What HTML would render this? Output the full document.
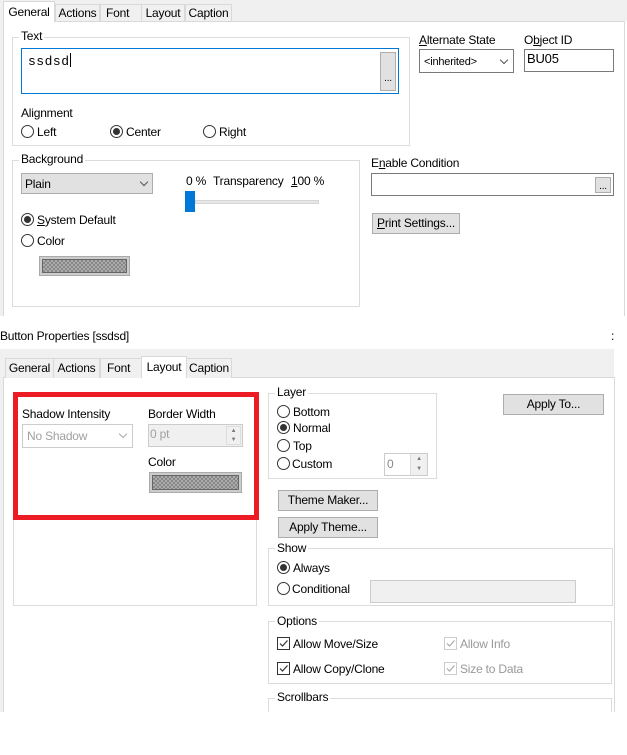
<!DOCTYPE html>
<html><head><style>
*{box-sizing:border-box;margin:0;padding:0}
body{width:627px;height:755px;background:#fff;font-family:"Liberation Sans",sans-serif;font-size:12px;color:#000;position:relative;overflow:hidden;letter-spacing:-0.2px}
.a{position:absolute}
.t{position:absolute;white-space:nowrap;line-height:14px}
.tab{position:absolute;border:1px solid #d9d9d9;border-bottom:none;background:#f0f0f0;text-align:center;line-height:16px}
.tab.s{background:#fff;z-index:2}
.grp{position:absolute;border:1px solid #dcdcdc}
.lg{position:absolute;background:#fff;padding:0 2px;line-height:13px;white-space:nowrap}
.rad{position:absolute;width:13px;height:13px;border:1px solid #333;border-radius:50%;background:#fff}
.rad.on::after{content:"";position:absolute;left:2px;top:2px;width:7px;height:7px;border-radius:50%;background:#333}
.btn{position:absolute;background:#e1e1e1;border:1px solid #adadad;text-align:center;white-space:nowrap}
.box{position:absolute;border:1px solid #7a7a7a;background:#fff}
.sw{position:absolute;background:#ccc;border:1px solid #aaa;padding:2px}
.sw div{width:100%;height:100%;border:1px solid #666;background-color:#aaa;background-image:linear-gradient(45deg,#888 25%,transparent 25%,transparent 75%,#888 75%),linear-gradient(45deg,#888 25%,transparent 25%,transparent 75%,#888 75%);background-size:4px 4px;background-position:0 0,2px 2px}
.chev{position:absolute;width:6px;height:6px;border-right:1px solid #555;border-bottom:1px solid #555;transform:rotate(45deg)}
.cb{position:absolute;width:13px;height:13px;border:1px solid #333;background:#fff}
.cb svg{position:absolute;left:0;top:0}
u{text-decoration:underline}
</style></head><body>
<!-- TOP -->
<div class="a" style="left:0;top:0;width:627px;height:21px;background:#f0f0f0"></div>
<div class="a" style="left:0;top:21px;width:4px;height:295px;background:#f0f0f0"></div>
<div class="a" style="left:3px;top:21px;width:622px;height:295px;border:1px solid #d9d9d9;border-bottom:none;background:#fff"></div>
<div class="tab s" style="left:3px;top:1px;width:52px;height:21px;line-height:20px">General</div>
<div class="tab" style="left:55px;top:4px;width:45px;height:17px">Actions</div>
<div class="tab" style="left:100px;top:4px;width:42px;height:17px;text-align:left;padding-left:5px">Font</div>
<div class="tab" style="left:141px;top:4px;width:44px;height:17px">Layout</div>
<div class="tab" style="left:185px;top:4px;width:47px;height:17px">Caption</div>

<div class="grp" style="left:12px;top:37px;width:398px;height:109px"></div>
<div class="lg" style="left:19px;top:30px">Text</div>
<div class="a" style="left:21px;top:48px;width:378px;height:46px;border:1px solid #0078d7"></div>
<div class="t" style="left:28px;top:53px;font-family:'Liberation Mono',monospace;font-size:13px;letter-spacing:0.5px">ssdsd<span style="display:inline-block;width:1px;height:14px;background:#000;vertical-align:-2px"></span></div>
<div class="btn" style="left:380px;top:52px;width:16px;height:39px;line-height:52px;font-size:10px">...</div>
<div class="t" style="left:21px;top:106px">Alignment</div>
<div class="rad" style="left:21px;top:125px"></div><div class="t" style="left:37px;top:125px">Left</div>
<div class="rad on" style="left:110px;top:125px"></div><div class="t" style="left:126px;top:125px">Center</div>
<div class="rad" style="left:203px;top:125px"></div><div class="t" style="left:219px;top:125px">Right</div>

<div class="grp" style="left:12px;top:160px;width:348px;height:147px"></div>
<div class="lg" style="left:19px;top:153px">Background</div>
<div class="a" style="left:21px;top:173px;width:132px;height:21px;background:#e1e1e1;border:1px solid #adadad"></div>
<div class="t" style="left:25px;top:177px">Plain</div>
<div class="chev" style="left:141px;top:179px"></div>
<div class="t" style="left:186px;top:174px">0 %</div>
<div class="t" style="left:213px;top:174px">Transparency</div>
<div class="t" style="left:291px;top:174px"><u>1</u>00 %</div>
<div class="a" style="left:195px;top:200px;width:124px;height:4px;background:#e7e7e7;border:1px solid #d6d6d6"></div>
<div class="a" style="left:185px;top:191px;width:10px;height:21px;background:#0078d7"></div>
<div class="rad on" style="left:21px;top:213px"></div><div class="t" style="left:37px;top:213px"><u>S</u>ystem Default</div>
<div class="rad" style="left:21px;top:234px"></div><div class="t" style="left:37px;top:234px">Color</div>
<div class="sw" style="left:39px;top:256px;width:91px;height:20px"><div></div></div>

<div class="t" style="left:419px;top:33px"><u>A</u>lternate State</div>
<div class="box" style="left:419px;top:49px;width:95px;height:24px"></div>
<div class="t" style="left:424px;top:55px;font-size:11px">&lt;inherited&gt;</div>
<div class="chev" style="left:501px;top:57px"></div>
<div class="t" style="left:524px;top:33px">O<u>b</u>ject ID</div>
<div class="box" style="left:524px;top:49px;width:90px;height:23px"></div>
<div class="t" style="left:527px;top:52px;font-size:13px">BU05</div>
<div class="t" style="left:371px;top:156px">E<u>n</u>able Condition</div>
<div class="box" style="left:371px;top:173px;width:243px;height:23px"></div>
<div class="btn" style="left:595px;top:177px;width:16px;height:16px;line-height:18px;font-size:10px">...</div>
<div class="btn" style="left:372px;top:213px;width:88px;height:21px;line-height:19px"><u>P</u>rint Settings...</div>

<!-- BOTTOM -->
<div class="t" style="left:0;top:329px;font-size:12px">Button Properties [ssdsd]</div>
<div class="t" style="left:611px;top:329px">:</div>
<div class="a" style="left:0;top:349px;width:614px;height:29px;background:#f0f0f0"></div>
<div class="a" style="left:0;top:377px;width:4px;height:335px;background:#f0f0f0"></div>
<div class="a" style="left:3px;top:377px;width:612px;height:335px;border:1px solid #d9d9d9;border-bottom:none;background:#fff"></div>
<div class="tab" style="left:5px;top:358px;width:49px;height:20px;line-height:19px">General</div>
<div class="tab" style="left:53px;top:358px;width:47px;height:20px;line-height:19px">Actions</div>
<div class="tab" style="left:100px;top:358px;width:42px;height:20px;line-height:19px;text-align:left;padding-left:6px">Font</div>
<div class="tab s" style="left:141px;top:356px;width:46px;height:22px;line-height:20px">Layout</div>
<div class="tab" style="left:186px;top:358px;width:46px;height:20px;line-height:19px">Caption</div>

<div class="grp" style="left:13px;top:392px;width:244px;height:214px"></div>
<div class="a" style="left:13px;top:392px;width:246px;height:128px;border:5px solid #ed1c24"></div>
<div class="t" style="left:22px;top:407px">Shadow Intensity</div>
<div class="a" style="left:22px;top:424px;width:111px;height:24px;border:1px solid #ccc"></div>
<div class="t" style="left:27px;top:429px;color:#a0a0a0">No Shadow</div>
<div class="chev" style="left:120px;top:431px;border-color:#aaa"></div>
<div class="t" style="left:148px;top:407px">Border Width</div>
<div class="a" style="left:148px;top:424px;width:95px;height:23px;border:1px solid #ccc;background:#f0f0f0"></div>
<div class="t" style="left:150px;top:427px;color:#a0a0a0">0 pt</div>
<div class="a" style="left:226px;top:426px;width:15px;height:19px;background:#f0f0f0;border:1px solid #ddd;font-size:6px;color:#777;text-align:center;line-height:9px">▲<br>▼</div>
<div class="t" style="left:148px;top:455px">Color</div>
<div class="sw" style="left:149px;top:472px;width:93px;height:21px"><div></div></div>

<div class="grp" style="left:268px;top:393px;width:169px;height:86px"></div>
<div class="lg" style="left:275px;top:386px">Layer</div>
<div class="rad" style="left:277px;top:405px"></div><div class="t" style="left:293px;top:405px">Bottom</div>
<div class="rad on" style="left:277px;top:421px"></div><div class="t" style="left:293px;top:421px">Normal</div>
<div class="rad" style="left:277px;top:439px"></div><div class="t" style="left:293px;top:439px">Top</div>
<div class="rad" style="left:277px;top:457px"></div><div class="t" style="left:292px;top:457px">Custom</div>
<div class="a" style="left:384px;top:453px;width:44px;height:23px;border:1px solid #ccc"></div>
<div class="t" style="left:387px;top:457px;color:#888">0</div>
<div class="a" style="left:410px;top:454px;width:17px;height:21px;background:#f0f0f0;border-left:1px solid #ddd;font-size:6px;color:#777;text-align:center;line-height:10px">▲<br>▼</div>
<div class="btn" style="left:503px;top:394px;width:101px;height:21px;line-height:19px">Apply To...</div>
<div class="btn" style="left:278px;top:490px;width:100px;height:21px;line-height:19px">Theme Maker...</div>
<div class="btn" style="left:278px;top:517px;width:100px;height:21px;line-height:19px">Apply Theme...</div>

<div class="grp" style="left:268px;top:548px;width:345px;height:58px"></div>
<div class="lg" style="left:275px;top:542px">Show</div>
<div class="rad on" style="left:277px;top:561px"></div><div class="t" style="left:293px;top:561px">Always</div>
<div class="rad" style="left:277px;top:582px"></div><div class="t" style="left:292px;top:582px">Conditional</div>
<div class="a" style="left:370px;top:580px;width:206px;height:23px;border:1px solid #ccc;background:#f0f0f0"></div>

<div class="grp" style="left:268px;top:621px;width:344px;height:63px"></div>
<div class="lg" style="left:275px;top:615px">Options</div>
<div class="cb" style="left:277px;top:637px"><svg width="11" height="11"><path d="M2 5.5L4.5 8L9.5 2.5" stroke="#333" fill="none" stroke-width="1.2"/></svg></div><div class="t" style="left:293px;top:637px">Allow Move/Size</div>
<div class="cb" style="left:277px;top:662px"><svg width="11" height="11"><path d="M2 5.5L4.5 8L9.5 2.5" stroke="#333" fill="none" stroke-width="1.2"/></svg></div><div class="t" style="left:293px;top:662px">Allow Copy/Clone</div>
<div class="cb" style="left:444px;top:637px;border-color:#ccc"><svg width="11" height="11"><path d="M2 5.5L4.5 8L9.5 2.5" stroke="#aaa" fill="none" stroke-width="1.2"/></svg></div><div class="t" style="left:460px;top:637px;color:#999">Allow Info</div>
<div class="cb" style="left:444px;top:662px;border-color:#ccc"><svg width="11" height="11"><path d="M2 5.5L4.5 8L9.5 2.5" stroke="#aaa" fill="none" stroke-width="1.2"/></svg></div><div class="t" style="left:460px;top:662px;color:#999">Size to Data</div>

<div class="a" style="left:268px;top:698px;width:344px;height:14px;border:1px solid #dcdcdc;border-bottom:none"></div>
<div class="lg" style="left:275px;top:691px">Scrollbars</div>
</body></html>
